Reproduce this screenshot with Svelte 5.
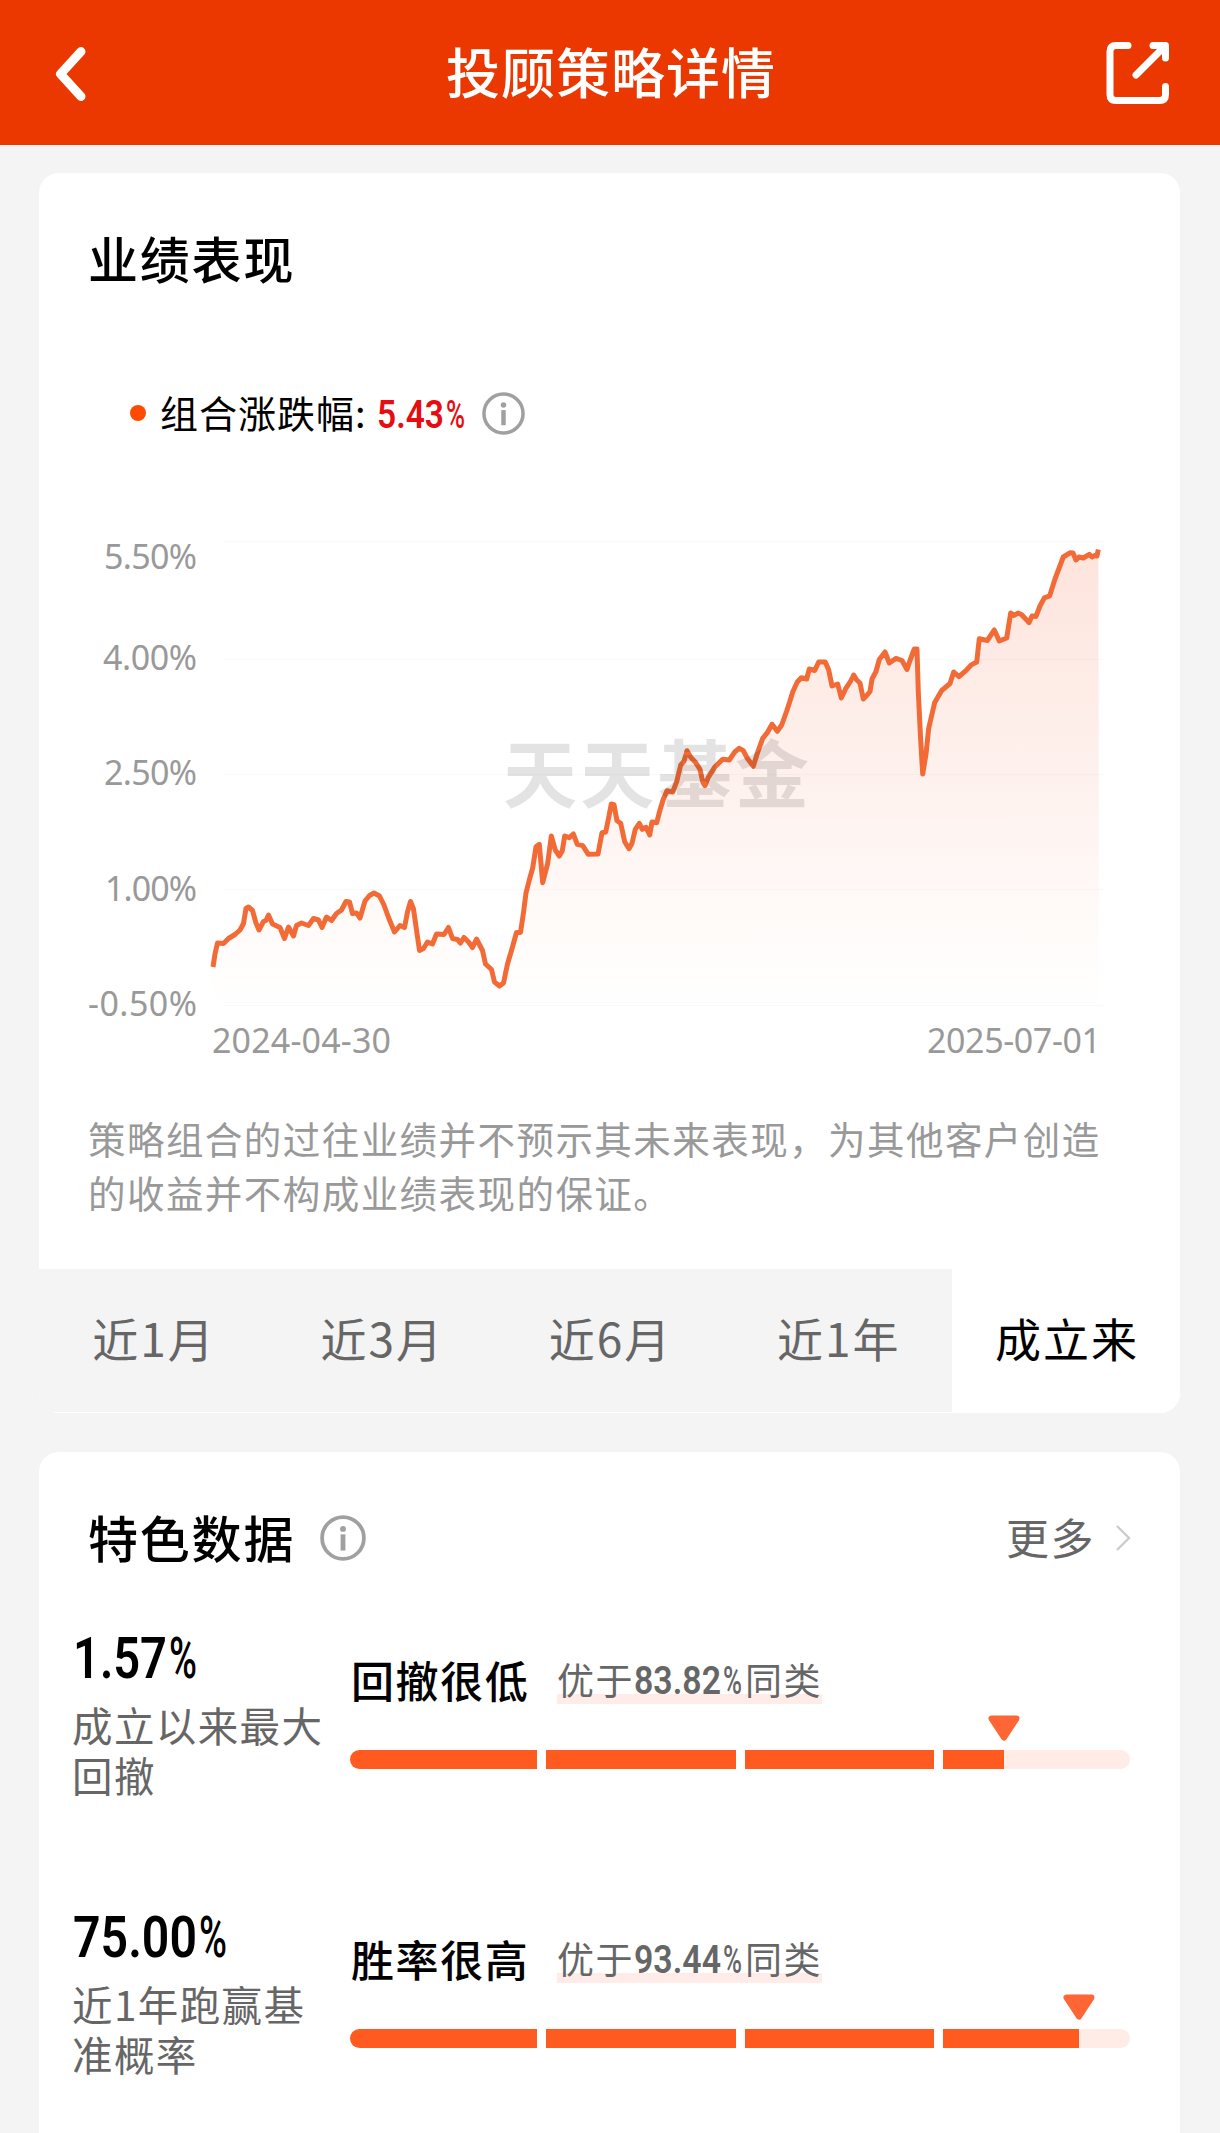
<script>
  const points =
    "213,967 215,954 217.5,943 223.5,943.5 228.5,938.5 235,934.5 240,930 243.5,923.5 246,908.5 248.5,907 252.5,910.5 256,923 259,930 263.5,921.5 266,920.5 268.5,915 272.5,924 280,927.5 284.5,938.5 288.5,927 293.5,936 296.5,925.5 301.5,923 308.5,925.5 313.5,918.5 318.5,920 322,927.5 326.5,917 331.5,920.5 336.5,913.5 341.5,910 346,901.5 349.5,902 352.5,913.5 356.5,913 360,918 365,901 369.5,895.5 374,893 379.5,896 384,905 388.5,917.5 394.5,932 400,925.5 404.5,927.5 407.5,912 410.5,901.5 413.5,909 416.5,930 419.5,950.5 423.5,948.5 427.5,942 432.5,944 436.5,934 444,934.5 448.5,927.5 452.5,938.5 457.5,939.5 460.5,943 464,937.5 468.5,942 472.5,947.5 476.5,939 482.5,950.5 485.5,964 491.5,969.5 494.5,982 499.5,986 503.5,983 507.5,964 511.5,950.5 516.5,932.5 520.5,932.5 523.5,912.5 526,893 529.3,880 532.7,868 536,846.7 539.3,844.3 542.7,882.7 547.7,863.3 551.3,836 555.3,850 559.3,856 562.3,850.7 564.7,836 569.3,837.7 573.3,834 577.3,844.3 582.7,845.7 588.3,854.3 598,854 602,832.7 605.7,832 609,816 611.3,804 614,804.7 617,820.7 620.7,823.3 624.7,841.7 629,848.7 632,843.3 635.3,829.3 639.3,823.3 642.3,829.3 646,827.3 649.7,835 652,822 656.7,822.7 660,810 663.3,799.3 667,790.7 672.7,792 676.7,781.7 680.7,765 684,761.3 687,750.7 690.7,757.3 695,761.7 700,769.3 702.7,781.7 705,785.7 708.3,777.3 715,766.7 722.7,759.3 729.3,760 735,751.7 739.3,748.3 743.3,750.7 747.3,758.3 753.3,766.3 757.3,753.3 762.7,738.3 767.3,732.7 772,724.3 777.3,731.3 781.7,725 786.7,711 789.5,702.5 792.7,692 797.3,682 801.3,677.7 806.7,679 809.3,669 814.7,670.5 818.7,662 825.3,662 828.7,670 832,686 837.7,684 841.3,698 845.7,688.7 850.7,681 853.7,675 856.7,680 860,683 863.3,699 866,696.3 870,691.5 872,679 876,671.5 879.3,659.5 885,652 889.3,663 896,658.4 902,660.5 907,669.5 910,660.5 914.3,649 917,649 918.3,692 920.7,740.4 922.7,774 926,754 928.7,728.3 934.7,702.5 941.7,690.5 950,683.5 953.7,672 959,676.7 966.7,669.8 971.7,664.6 976.7,662 979.3,638.8 987.3,640.5 994.3,630 999.3,641 1006.7,638 1010.7,613 1014,615.5 1018,613 1021.7,614.7 1029,622.6 1032,616 1036,616.4 1040,606 1044.3,597.8 1049.7,595.8 1055,579 1063.3,557 1070.3,552.7 1073,553 1076,560 1079,557 1083.3,558 1089.3,554.4 1092,557 1095,555.5 1097,556 1098.3,549.6";

  const yAxis = [
    { label: "5.50%", y: 569, line: 541, x: 104, width: 93 },
    { label: "4.00%", y: 670, line: 659, x: 103, width: 94 },
    { label: "2.50%", y: 785, line: 774, x: 104, width: 93 },
    { label: "1.00%", y: 901, line: 889, x: 105, width: 92 },
    { label: "-0.50%", y: 1016, line: 1005, x: 88, width: 109 },
  ];

  const tabs = ["近1月", "近3月", "近6月", "近1年", "成立来"];
  let active = $state("成立来");

  const metrics = [
    {
      value: "1.57",
      width: 94,
      desc: "成立以来最大回撤",
      level: "回撤很低",
      rank: 83.82,
    },
    {
      value: "75.00",
      width: 124,
      desc: "近1年跑赢基准概率",
      level: "胜率很高",
      rank: 93.44,
    },
  ];
</script>

<!-- narrow numerals: height is the cap height -->
{#snippet numeral(value, height, width, pct)}
  <span class="numeral">
    <svg {width} {height}>
      <text
        y={height}
        font-size={height / 0.711}
        textLength={width}
        lengthAdjust="spacingAndGlyphs">{value}</text
      >
    </svg>
    <svg width={pct} {height}>
      <text
        class="pct"
        y={height}
        font-size={height / 0.711}
        textLength={pct}
        lengthAdjust="spacingAndGlyphs">%</text
      >
    </svg>
  </span>
{/snippet}

{#snippet info(size)}
  <svg class="info" width={size} height={size} viewBox="0 0 44 44">
    <circle cx="22" cy="22" r="20" fill="none" stroke="#a0a0a0" stroke-width="3.6" />
    <circle cx="22" cy="13.3" r="2.8" fill="#a0a0a0" />
    <path d="M22 18.5V34" stroke="#a0a0a0" stroke-width="4.6" />
  </svg>
{/snippet}

<div class="page">
  <header>
    <svg class="back" width="36" height="60" viewBox="0 0 36 60">
      <path d="M27 8.5L6.5 31L27 53.5" />
    </svg>
    <h1>投顾策略详情</h1>
    <svg class="share" width="64" height="64" viewBox="0 0 64 64">
      <path d="M22 4.5H10Q4 4.5 4 10.5V53.5Q4 59.5 10 59.5H53.5Q59.5 59.5 59.5 53.5V45.5" />
      <path d="M47 4.5H59.5V17M30 34L59 5" />
    </svg>
  </header>

  <section class="card">
    <h2>业绩表现</h2>
    <div class="legend">
      <span class="dot"></span>
      <span class="legend-label">组合涨跌幅:</span>
      <span class="red">{@render numeral("5.43", 27, 67, 19)}</span>
      {@render info(43)}
    </div>

    <svg class="chart" width="1141" height="580" viewBox="39 500 1141 580">
      <defs>
        <linearGradient id="area" x1="0" y1="0" x2="0" y2="1">
          <stop offset="0" stop-color="#fde4dc" />
          <stop offset="0.5" stop-color="#fef1ed" />
          <stop offset="0.8" stop-color="#fffaf8" />
          <stop offset="1" stop-color="#ffffff" />
        </linearGradient>
      </defs>
      <polygon points="{points} 1099,1005 213,1005" fill="url(#area)" />
      {#each yAxis as tick}
        <path d="M223 {tick.line}.5H1103" stroke="#000" stroke-opacity="0.025" />
        <text x={tick.x} y={tick.y} textLength={tick.width}>{tick.label}</text>
      {/each}
      <polyline {points} />
      <text class="watermark" x="503" y="802" textLength="306">天天基金</text>
      <text x="212" y="1053" textLength="179">2024-04-30</text>
      <text x="927" y="1053" textLength="174">2025-07-01</text>
    </svg>

    <p class="note">
      策略组合的过往业绩并不预示其未来表现，为其他客户创造的收益并不构成业绩表现的保证。
    </p>

    <div class="tabs">
      {#each tabs as tab}
        <button class:active={tab === active} onclick={() => (active = tab)}>
          {tab}
        </button>
      {/each}
    </div>
  </section>

  <section class="card features">
    <div class="head">
      <h2>特色数据</h2>
      {@render info(46)}
      <a href="#more">
        <span>更多</span>
        <svg width="16" height="28" viewBox="0 0 16 28">
          <path d="M2 2L14 14L2 26" fill="none" stroke="#ccc" stroke-width="2.4" />
        </svg>
      </a>
    </div>

    {#each metrics as m}
      <div class="metric">
        <div class="summary">
          {@render numeral(m.value, 41, m.width, 28)}
          <p>{m.desc}</p>
        </div>
        <div class="detail">
          <div class="line">
            <h3>{m.level}</h3>
            <div class="rank">
              <span>优于</span>
              {@render numeral(m.rank, 28, 87, 19)}
              <span>同类</span>
            </div>
          </div>
          <div class="bar">
            <div class="track">
              <div class="fill" style="width: {m.rank}%"></div>
            </div>
            <div class="gaps"><i></i><i></i><i></i></div>
            <svg class="marker" style="left: {m.rank}%" width="32" height="26" viewBox="0 0 32 26">
              <path d="M3.5 3.5H28.5L16 22.5Z" />
            </svg>
          </div>
        </div>
      </div>
    {/each}
  </section>
</div>

<style>
  :global(body) {
    background: #f4f4f4;
  }
  .page {
    width: 1220px;
    height: 2133px;
    overflow: hidden;
    background: #f4f4f4;
    font-family: "Noto Sans CJK SC", sans-serif;
    color: #000;
  }
  h1,
  h2,
  h3,
  p {
    margin: 0;
  }

  header {
    display: flex;
    align-items: center;
    justify-content: space-between;
    height: 145px;
    padding: 0 50px 0 54px;
    box-sizing: border-box;
    background: #ea3800;
    color: #fff;
  }
  header svg {
    fill: none;
    stroke: #fff;
    stroke-linecap: round;
    stroke-linejoin: round;
  }
  .back {
    stroke-width: 9;
    margin-right: 26px;
  }
  .share {
    stroke-width: 7;
  }
  h1 {
    margin-bottom: 4px;
    font-size: 54px;
    font-weight: 500;
    letter-spacing: 1px;
    line-height: 80px;
  }

  .card {
    width: 1141px;
    margin: 28px 0 0 39px;
    padding-top: 54px;
    border-radius: 20px;
    background: #fff;
    overflow: hidden;
  }
  .card.features {
    height: 800px;
    margin-top: 39px;
    padding-top: 56px;
  }
  h2 {
    padding-left: 49px;
    font-size: 50px;
    font-weight: 500;
    line-height: 60px;
    letter-spacing: 1.8px;
  }

  .legend {
    display: flex;
    align-items: center;
    height: 44px;
    margin-top: 104px;
    padding-left: 91px;
    font-size: 38px;
  }
  .dot {
    width: 16px;
    height: 16px;
    border-radius: 50%;
    background: #ff4a00;
  }
  .legend-label {
    width: 217px;
    margin: 0 0 3px 14px;
    letter-spacing: 1px;
    white-space: nowrap;
  }
  .red {
    margin: 2px 17px 0 0;
    color: #e60c12;
  }
  .numeral {
    display: flex;
    gap: 2px;
    font-family: Roboto, sans-serif;
    font-weight: 600;
    letter-spacing: 0;
  }
  .numeral svg {
    overflow: visible;
    fill: currentColor;
  }
  .numeral .pct {
    font-weight: 500;
  }

  .chart {
    display: block;
    margin-top: 65px;
  }
  .chart text {
    font-family: "Noto Sans", sans-serif;
    font-size: 34px;
    fill: #999;
  }
  .chart polyline {
    fill: none;
    stroke: #f26b36;
    stroke-width: 5;
    stroke-linejoin: round;
  }
  .chart .watermark {
    font-family: "Noto Sans CJK SC", sans-serif;
    font-size: 74px;
    font-weight: 700;
    fill: #000;
    fill-opacity: 0.11;
  }

  .note {
    margin: 31px 0 50px;
    padding: 0 75px 0 49px;
    font-size: 37.5px;
    letter-spacing: 1.45px;
    line-height: 54px;
    color: #999;
  }

  .tabs {
    display: grid;
    grid-template-columns: repeat(5, 1fr);
    height: 143px;
    border-bottom: 1px solid #fff;
  }
  button {
    border: 0;
    padding: 0 0 8px 2px;
    background: #f4f4f4;
    font: 46px "Noto Sans CJK SC", sans-serif;
    letter-spacing: 2px;
    color: #666;
  }
  button.active {
    background: #fff;
    color: #000;
  }

  .head {
    display: flex;
    align-items: center;
    height: 60px;
    margin-bottom: 1px;
  }
  .head h2 {
    margin-bottom: 4px;
  }
  .head .info {
    margin-left: 25px;
  }
  .head a {
    display: flex;
    align-items: center;
    gap: 20px;
    margin-left: auto;
    padding-right: 49px;
    font-size: 43px;
    letter-spacing: 1.5px;
    color: #666;
    text-decoration: none;
  }
  .head a span {
    margin-bottom: 4px;
  }

  .metric {
    display: flex;
    height: 211px;
    padding: 68px 50px 0 33px;
  }
  .summary {
    width: 278px;
  }
  .summary .numeral {
    padding-left: 1px;
  }
  .summary p {
    width: 256px;
    margin-top: 22px;
    font-size: 40.5px;
    letter-spacing: 1.4px;
    line-height: 50px;
    color: #666;
  }
  .detail {
    flex: 1;
    padding-top: 17px;
  }
  .line {
    display: flex;
    align-items: center;
    height: 50px;
  }
  h3 {
    width: 206px;
    padding-left: 1px;
    font-size: 43px;
    font-weight: 500;
    letter-spacing: 1.6px;
    white-space: nowrap;
  }
  .rank {
    display: flex;
    align-items: center;
    font-size: 37px;
    line-height: 50px;
    letter-spacing: 1.5px;
    white-space: nowrap;
    color: #666;
    background: linear-gradient(#ffece8, #ffece8) 0 100% / 100% 10px no-repeat;
  }
  .rank .numeral {
    margin: 1px 3px 0 0;
  }
  .bar {
    position: relative;
    margin-top: 46px;
  }
  .track {
    height: 19px;
    border-radius: 10px;
    background: #ffece6;
    overflow: hidden;
  }
  .fill {
    height: 100%;
    background: #ff5a1f;
  }
  .gaps {
    position: absolute;
    inset: 0 187px;
    display: flex;
    justify-content: space-between;
  }
  .gaps i {
    width: 9px;
    background: #fff;
  }
  .marker {
    position: absolute;
    top: -35px;
    margin-left: -16px;
    fill: #ff6535;
    stroke: #ff6535;
    stroke-width: 6;
    stroke-linejoin: round;
  }
</style>
